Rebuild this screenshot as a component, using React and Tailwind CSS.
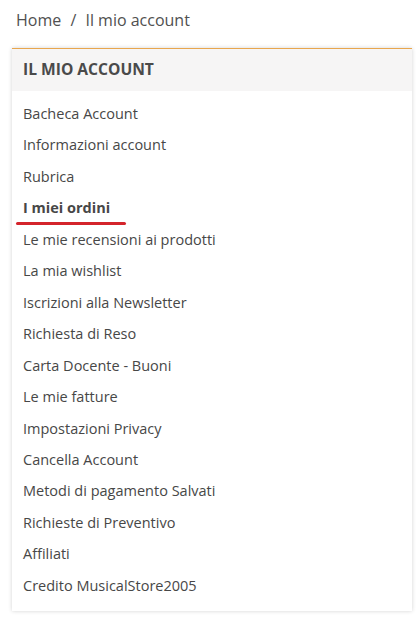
export default function App() {
  const items = [
    "Bacheca Account",
    "Informazioni account",
    "Rubrica",
    "I miei ordini",
    "Le mie recensioni ai prodotti",
    "La mia wishlist",
    "Iscrizioni alla Newsletter",
    "Richiesta di Reso",
    "Carta Docente - Buoni",
    "Le mie fatture",
    "Impostazioni Privacy",
    "Cancella Account",
    "Metodi di pagamento Salvati",
    "Richieste di Preventivo",
    "Affiliati",
    "Credito MusicalStore2005",
  ];
  return (
    <div className="w-[418px] h-[617px] bg-white text-[#474747] overflow-hidden" style={{ fontFamily: '"Open Sans", sans-serif' }}>
      <div className="pl-4 pt-[9px] h-[48px] text-[16px] leading-[22px] text-[#505050]">
        Home <span className="mx-[5px]">/</span> Il mio account
      </div>
      <div className="mx-3 mt-0 w-[400px] bg-white border-t-[1.5px] border-[#e8a64e] shadow-[0_0_4px_rgba(0,0,0,0.18)]">
        <div className="h-[42px] bg-[#f6f5f5] flex items-center pl-[11px] font-bold text-[15.6px] text-[#4a4a4a]">
          IL MIO ACCOUNT
        </div>
        <ul className="pt-[7px] pb-[9px]">
          {items.map((it) => (
            <li key={it} className="h-[31.47px] flex items-center pl-[11px] text-[14.5px] relative">
              {it === "I miei ordini" ? (
                <>
                  <span className="font-bold">{it}</span>
                  <span className="absolute left-[4px] top-[30px] w-[110px] h-[3px] rounded-full bg-[#d4242b]" />
                </>
              ) : (
                it
              )}
            </li>
          ))}
        </ul>
      </div>
    </div>
  );
}
